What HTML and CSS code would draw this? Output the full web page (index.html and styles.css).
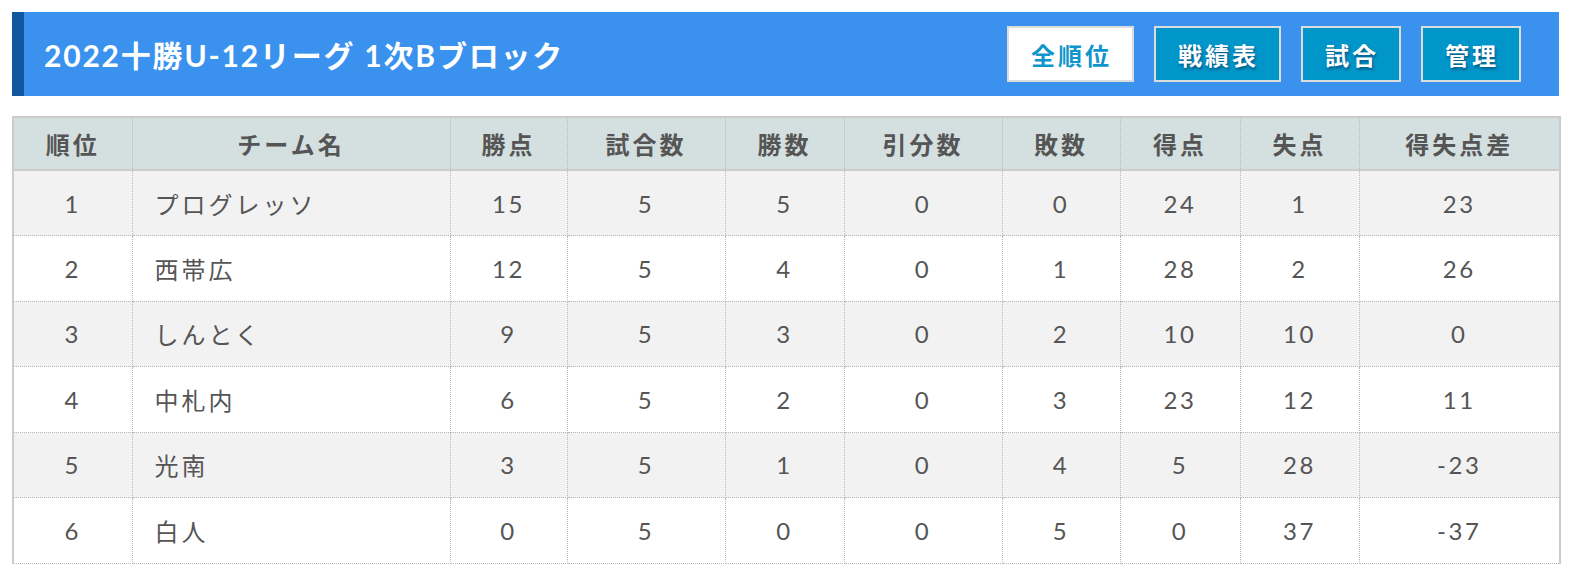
FILE: index.html
```html
<!DOCTYPE html>
<html lang="ja">
<head>
<meta charset="utf-8">
<title>2022十勝U-12リーグ 1次Bブロック</title>
<link rel="stylesheet" href="styles.css">
</head>
<body>
<div class="page">
  <header class="bar">
    <h1 class="title">2022十勝U-12リーグ 1次Bブロック</h1>
    <nav class="nav">
      <a class="btn btn-active">全順位</a>
      <a class="btn">戦績表</a>
      <a class="btn">試合</a>
      <a class="btn">管理</a>
    </nav>
  </header>
  <table class="standings">
    <colgroup>
      <col class="c-rank"><col class="c-team"><col class="c-pts"><col class="c-gp"><col class="c-w"><col class="c-d"><col class="c-l"><col class="c-gf"><col class="c-ga"><col class="c-gd">
    </colgroup>
    <thead>
      <tr><th>順位</th><th>チーム名</th><th>勝点</th><th>試合数</th><th>勝数</th><th>引分数</th><th>敗数</th><th>得点</th><th>失点</th><th>得失点差</th></tr>
    </thead>
    <tbody>
      <tr><td>1</td><td class="team">プログレッソ</td><td>15</td><td>5</td><td>5</td><td>0</td><td>0</td><td>24</td><td>1</td><td>23</td></tr>
      <tr><td>2</td><td class="team">西帯広</td><td>12</td><td>5</td><td>4</td><td>0</td><td>1</td><td>28</td><td>2</td><td>26</td></tr>
      <tr><td>3</td><td class="team">しんとく</td><td>9</td><td>5</td><td>3</td><td>0</td><td>2</td><td>10</td><td>10</td><td>0</td></tr>
      <tr><td>4</td><td class="team">中札内</td><td>6</td><td>5</td><td>2</td><td>0</td><td>3</td><td>23</td><td>12</td><td>11</td></tr>
      <tr><td>5</td><td class="team">光南</td><td>3</td><td>5</td><td>1</td><td>0</td><td>4</td><td>5</td><td>28</td><td>-23</td></tr>
      <tr><td>6</td><td class="team">白人</td><td>0</td><td>5</td><td>0</td><td>0</td><td>5</td><td>0</td><td>37</td><td>-37</td></tr>
    </tbody>
  </table>
</div>
</body>
</html>
```

FILE: styles.css
```css
* { box-sizing: border-box; }
body {
  margin: 12px;
  background: #fff;
  font-family: "Lato", "Noto Sans CJK JP", sans-serif;
  color: #555;
}
.page { width: 1547px; }
.bar {
  display: flex;
  align-items: center;
  justify-content: space-between;
  height: 84px;
  background: #3a92ee;
  border-left: 12px solid #1057a0;
  padding: 0 38px 0 20px;
}
.title {
  margin: 0;
  color: #fff;
  font-size: 30px;
  font-weight: 700;
  letter-spacing: 1.8px;
}
.nav { display: flex; gap: 20px; }
.btn {
  display: flex;
  align-items: center;
  justify-content: center;
  height: 56px;
  padding: 0 20px 0 22px;
  border: 2px solid #dcdcdc;
  background: #0096c9;
  color: #fff;
  font-size: 24px;
  font-weight: 700;
  letter-spacing: 3px;
  text-shadow: 1px 2px 3px rgba(0, 40, 80, 0.6);
}
.btn-active {
  background: #fff;
  color: #0e96cc;
  text-shadow: none;
}
.standings {
  margin-top: 20px;
  width: 1547px;
  border-collapse: collapse;
  table-layout: fixed;
  border-top: 2px solid #cccccc;
  border-left: 2px solid #cccccc;
  border-right: 2px solid #cccccc;
}
.c-rank { width: 119px; }
.c-team { width: 318px; }
.c-pts { width: 117px; }
.c-gp { width: 158px; }
.c-w { width: 119px; }
.c-d { width: 158px; }
.c-l { width: 118px; }
.c-gf { width: 120px; }
.c-ga { width: 119px; }
.c-gd { width: 201px; }
.standings th,
.standings td {
  border: 1px dotted #b8b8b8;
  text-align: center;
  padding: 0;
}
.standings th {
  height: 53px;
  background: #d4dfe0;
  border-bottom: 2px solid #cccccc;
  font-size: 24px;
  font-weight: 700;
  letter-spacing: 3px;
  color: #555;
}
.standings td {
  height: 65.5px;
  font-size: 24px;
  letter-spacing: 2.5px;
  color: #555;
}
.standings tbody tr:nth-child(odd) td { background: #f2f2f2; }
.standings tbody tr:nth-child(even) td { background: #fff; }
.standings td.team {
  text-align: left;
  padding-left: 22px;
  letter-spacing: 3px;
}
```
